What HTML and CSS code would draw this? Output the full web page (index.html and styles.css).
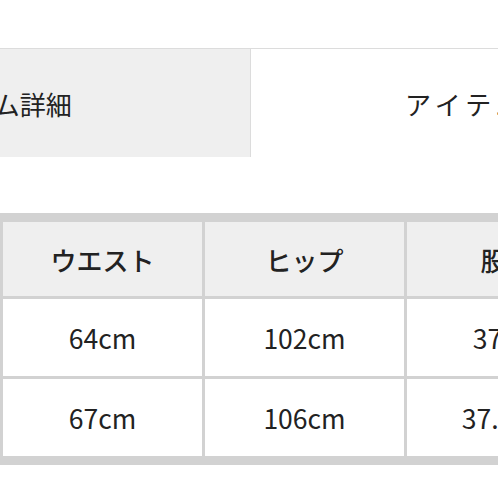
FILE: index.html
```html
<!DOCTYPE html>
<html lang="ja">
<head>
<meta charset="utf-8">
<link rel="stylesheet" href="styles.css">
</head>
<body>
<div class="page">
  <div class="tabs">
    <div class="tab tab-inactive">アイテム詳細</div>
    <div class="tab tab-active">アイテムレビュー</div>
  </div>
  <div class="size-table">
    <div class="cell head">ウエスト</div>
    <div class="cell head">ヒップ</div>
    <div class="cell head">股下</div>
    <div class="cell">64cm</div>
    <div class="cell">102cm</div>
    <div class="cell">37cm</div>
    <div class="cell">67cm</div>
    <div class="cell">106cm</div>
    <div class="cell">37.5cm</div>
  </div>
</div>
</body>
</html>
```

FILE: styles.css
```css
html, body {
  margin: 0;
  padding: 0;
  background: #ffffff;
  overflow: hidden;
}
.page {
  width: 498px;
  height: 498px;
  overflow: hidden;
  font-family: "Noto Sans CJK JP", "Noto Sans", sans-serif;
  color: #222;
}
.tabs {
  display: flex;
  margin-top: 48px;
  margin-left: -260px;
  width: 1100px;
  border-top: 1px solid #dcdcdc;
}
.tab {
  width: 510px;
  height: 108px;
  display: flex;
  align-items: center;
  justify-content: center;
  font-size: 26px;
  font-weight: 400;
  white-space: nowrap;
}
.tab-inactive {
  background: #efefef;
  border-right: 1px solid #dcdcdc;
}
.tab-active {
  background: #fff;
  justify-content: flex-start;
  padding-left: 154px;
  box-sizing: border-box;
  letter-spacing: 5px;
}
.size-table {
  margin-top: 56px;
  display: grid;
  grid-template-columns: repeat(3, 199px);
  grid-template-rows: 74px 77px 77px;
  gap: 3px;
  width: 700px;
  background: #d2d2d2;
  padding: 9px 0 9px 3px;
}
.cell {
  background: #fff;
  display: flex;
  align-items: center;
  justify-content: center;
  font-size: 26.5px;
  white-space: nowrap;
}
.head {
  background: #efefef;
  font-weight: 500;
  font-size: 26px;
}
```
